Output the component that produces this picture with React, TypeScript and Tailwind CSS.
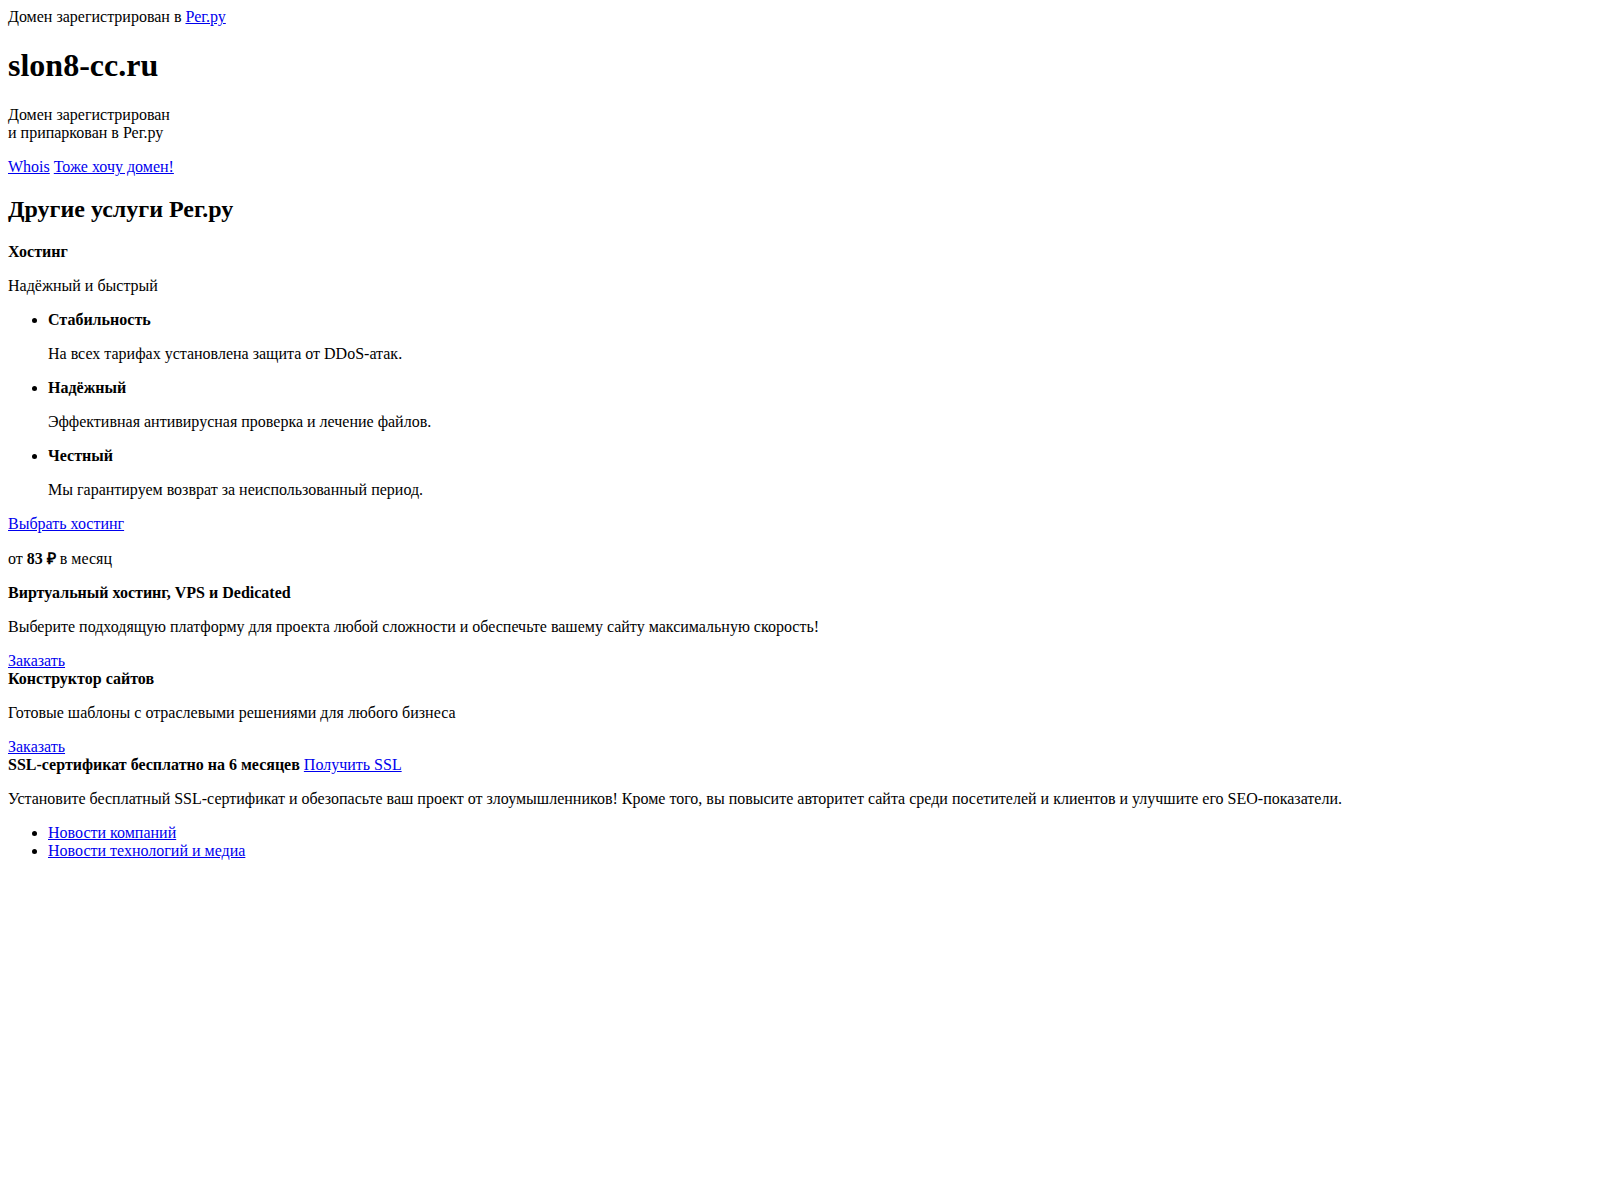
const A = ({ children }: { children: React.ReactNode }) => (
  <a href="#" className="text-[#0000ee] underline">
    {children}
  </a>
);

export default function App() {
  return (
    <div className="bg-white p-2 font-['Liberation_Serif','Times_New_Roman',serif] text-base leading-[normal] text-black">
      <div>
        Домен зарегистрирован в <A>Рег.ру</A>
      </div>
      <h1 className="my-[21.44px] text-[32px] font-bold">slon8-cc.ru</h1>
      <p className="my-4">
        Домен зарегистрирован
        <br />
        и припаркован в Рег.ру
      </p>
      <p className="my-4">
        <A>Whois</A> <A>Тоже хочу домен!</A>
      </p>

      <h2 className="my-[19.92px] text-[24px] font-bold">Другие услуги Рег.ру</h2>

      {/* Хостинг */}
      <p className="my-4 font-bold">Хостинг</p>
      <p className="my-4">Надёжный и быстрый</p>
      <ul className="my-4 list-disc pl-10">
        <li>
          <p className="my-4 font-bold">Стабильность</p>
          <p className="my-4">На всех тарифах установлена защита от DDoS-атак.</p>
        </li>
        <li>
          <p className="my-4 font-bold">Надёжный</p>
          <p className="my-4">Эффективная антивирусная проверка и лечение файлов.</p>
        </li>
        <li>
          <p className="my-4 font-bold">Честный</p>
          <p className="my-4">Мы гарантируем возврат за неиспользованный период.</p>
        </li>
      </ul>
      <p className="my-4">
        <A>Выбрать хостинг</A>
      </p>
      {/* ₽ comes from a fallback font; fix the line's growth to 1px */}
      <p className="my-4 pt-px">
        от <b className="font-bold">83 <span className="leading-[0]">₽</span></b> в месяц
      </p>
      <p className="my-4 font-bold">Виртуальный хостинг, VPS и Dedicated</p>
      <p className="my-4">
        Выберите подходящую платформу для проекта любой сложности и обеспечьте вашему сайту максимальную скорость!
      </p>
      <div>
        <A>Заказать</A>
      </div>

      {/* Конструктор */}
      <div className="font-bold">Конструктор сайтов</div>
      <p className="my-4">Готовые шаблоны с отраслевыми решениями для любого бизнеса</p>
      <div>
        <A>Заказать</A>
      </div>

      {/* SSL */}
      <div>
        <b className="font-bold">SSL-сертификат бесплатно на 6 месяцев</b> <A>Получить SSL</A>
      </div>
      <p className="my-4">
        Установите бесплатный SSL-сертификат и обезопасьте ваш проект от злоумышленников! Кроме того, вы повысите авторитет сайта среди посетителей и клиентов и улучшите его SEO-показатели.
      </p>
      <ul className="my-4 list-disc pl-10">
        <li>
          <A>Новости компаний</A>
        </li>
        <li>
          <A>Новости технологий и медиа</A>
        </li>
      </ul>
    </div>
  );
}
